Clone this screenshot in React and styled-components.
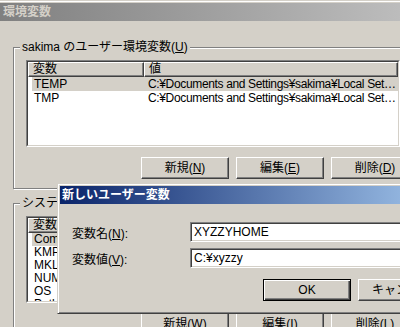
import React from "react";
import styled, { createGlobalStyle, css } from "styled-components";

const GlobalStyle = createGlobalStyle`
  html, body { margin: 0; padding: 0; }
  body {
    background: #d4d0c8;
    font-family: "Liberation Sans", "Noto Sans CJK JP", sans-serif;
    font-size: 12px;
    color: #000;
    overflow: hidden;
  }
`;

const Desktop = styled.div`
  position: relative;
  width: 400px;
  height: 327px;
  overflow: hidden;
  background: #d4d0c8;
`;

const Window = styled.div`
  width: 430px;
  height: 360px;
  margin-left: -3px;
  box-sizing: border-box;
  border-top: 1px solid #d4d0c8;
  border-left: 1px solid #d4d0c8;
  padding: 2px 2px 0 2px;
  box-shadow: inset 1px 1px 0 #fff;
  background: #d4d0c8;
`;

const TitleBar = styled.div`
  flex: none;
  height: 18px;
  display: flex;
  align-items: center;
  padding-left: ${(p) => p.$pad}px;
  background: ${(p) =>
    p.$active
      ? "linear-gradient(to right, #0a246a, #a6caf0)"
      : "linear-gradient(to right, #808080, #c0c0c0)"};
  color: ${(p) => (p.$active ? "#fff" : "#d4d0c8")};
  font-weight: bold;
  line-height: 14px;
  white-space: nowrap;
`;

const WindowBody = styled.div`
  padding: 26px 13px 0 13px;
`;

const GroupBox = styled.div`
  position: relative;
  border: 1px solid #808080;
  box-shadow: 1px 1px 0 #fff, inset 1px 1px 0 #fff;
  padding: 12px 12px 9px 12px;
  & + & {
    margin-top: 14px;
  }
`;

const GroupLabel = styled.span`
  position: absolute;
  top: -8px;
  left: 6px;
  padding: 0 2px;
  background: #d4d0c8;
  line-height: 14px;
  white-space: nowrap;
`;

const ListOuter = styled.div`
  width: 374px;
  height: 87px;
  box-sizing: border-box;
  border: 1px solid;
  border-color: #808080 #fff #fff #808080;
`;

const ListInner = styled.div`
  height: 100%;
  box-sizing: border-box;
  border: 1px solid;
  border-color: #404040 #d4d0c8 #d4d0c8 #404040;
  background: #fff;
  overflow: hidden;
`;

const Header = styled.div`
  display: flex;
  height: 15px;
`;

const HeaderCell = styled.div`
  width: ${(p) => (p.$grow ? "auto" : `${p.$w}px`)};
  flex: ${(p) => (p.$grow ? 1 : "none")};
  box-sizing: border-box;
  background: #d4d0c8;
  border: 1px solid;
  border-color: #fff #404040 #404040 #fff;
  box-shadow: inset -1px -1px 0 #808080;
  padding-left: 4px;
  line-height: 13px;
  white-space: nowrap;
`;

const Row = styled.div`
  display: flex;
  height: ${(p) => p.$h}px;
  line-height: ${(p) => p.$h}px;
  margin-left: 4px;
  background: ${(p) => (p.$selected ? "#d4d0c8" : "transparent")};
  white-space: nowrap;
`;

const NameCell = styled.div`
  width: 112px;
  flex: none;
  box-sizing: border-box;
  padding-left: 2px;
  overflow: hidden;
`;

const ValueCell = styled.div`
  flex: 1;
  padding-left: 4px;
  overflow: hidden;
  letter-spacing: -0.35px;
`;

const ButtonRow = styled.div`
  display: flex;
  gap: 7px;
  margin-top: ${(p) => p.$top}px;
  padding-left: ${(p) => p.$indent}px;
`;

const Button = styled.button`
  width: 88px;
  height: 22px;
  flex: none;
  box-sizing: border-box;
  padding: 0;
  background: #d4d0c8;
  font: inherit;
  color: #000;
  line-height: 14px;
  white-space: nowrap;
  border: 1px solid;
  border-color: #fff #404040 #404040 #fff;
  box-shadow: inset -1px -1px 0 #808080;
  ${(p) =>
    p.$default &&
    css`
      border-color: #000;
      box-shadow: inset 1px 1px 0 #fff, inset -1px -1px 0 #404040,
        inset -2px -2px 0 #808080;
    `}
`;

const Mn = styled.span`
  text-decoration: underline;
`;

const Dialog = styled.div`
  position: absolute;
  left: 57px;
  top: 183px;
  width: 400px;
  height: 131px;
  box-sizing: border-box;
  border: 1px solid;
  border-color: #d4d0c8 #404040 #404040 #d4d0c8;
  box-shadow: inset 1px 1px 0 #fff, inset -1px -1px 0 #808080;
  padding: 2px;
  background: #d4d0c8;
  display: flex;
  flex-direction: column;
`;

const DialogBody = styled.div`
  padding: 18px 12px 0 12px;
`;

const Field = styled.div`
  display: flex;
  align-items: center;
  height: 20px;
  & + & {
    margin-top: 6px;
  }
`;

const FieldLabel = styled.label`
  width: 118px;
  flex: none;
  white-space: nowrap;
`;

const TextBox = styled.input`
  flex: 1;
  min-width: 0;
  height: 20px;
  box-sizing: border-box;
  margin: 0;
  padding: 0 3px;
  font: inherit;
  color: #000;
  background: #fff;
  outline: none;
  border: 1px solid;
  border-color: #808080 #fff #fff #808080;
  box-shadow: inset 1px 1px 0 #404040, inset -1px -1px 0 #d4d0c8;
`;

const userVars = [
  { name: "TEMP", value: "C:¥Documents and Settings¥sakima¥Local Set…", selected: true },
  { name: "TMP", value: "C:¥Documents and Settings¥sakima¥Local Set…" },
];

const sysVars = [
  { name: "ComSpec", value: "C:¥WINDOWS¥system32¥cmd.exe", selected: true },
  { name: "KMP_AFFINITY", value: "compact" },
  { name: "MKL_NUM_THREADS", value: "2" },
  { name: "NUMBER_OF_PROCESSORS", value: "2" },
  { name: "OS", value: "Windows_NT" },
  { name: "Path", value: "C:¥WINDOWS¥system32;C:¥WINDOWS" },
];

function Label({ text, k }) {
  return (
    <>
      {text}(<Mn>{k}</Mn>)
    </>
  );
}

function ListView({ rows, rowH }) {
  return (
    <ListOuter>
      <ListInner>
        <Header>
          <HeaderCell $w={116}>変数</HeaderCell>
          <HeaderCell $grow>値</HeaderCell>
        </Header>
        {rows.map((r) => (
          <Row key={r.name} $h={rowH} $selected={r.selected}>
            <NameCell>{r.name}</NameCell>
            <ValueCell>{r.value}</ValueCell>
          </Row>
        ))}
      </ListInner>
    </ListOuter>
  );
}

function VarGroup({ title, k, rows, rowH, keys }) {
  return (
    <GroupBox>
      <GroupLabel>
        <Label text={title} k={k} />
      </GroupLabel>
      <ListView rows={rows} rowH={rowH} />
      <ButtonRow $top={10} $indent={115}>
        <Button>
          <Label text="新規" k={keys[0]} />
        </Button>
        <Button>
          <Label text="編集" k={keys[1]} />
        </Button>
        <Button>
          <Label text="削除" k={keys[2]} />
        </Button>
      </ButtonRow>
    </GroupBox>
  );
}

export default function App() {
  return (
    <>
      <GlobalStyle />
      <Desktop>
        <Window>
          <TitleBar $pad={3}>環境変数</TitleBar>
          <WindowBody>
            <VarGroup
              title="sakima のユーザー環境変数"
              k="U"
              rows={userVars}
              rowH={14}
              keys={["N", "E", "D"]}
            />
            <VarGroup
              title="システム環境変数"
              k="S"
              rows={sysVars}
              rowH={13}
              keys={["W", "I", "L"]}
            />
          </WindowBody>
        </Window>

        <Dialog>
          <TitleBar $active $pad={2}>
            新しいユーザー変数
          </TitleBar>
          <DialogBody>
            <Field>
              <FieldLabel>
                変数名(<Mn>N</Mn>):
              </FieldLabel>
              <TextBox readOnly value="XYZZYHOME" />
            </Field>
            <Field>
              <FieldLabel>
                変数値(<Mn>V</Mn>):
              </FieldLabel>
              <TextBox readOnly value="C:¥xyzzy" />
            </Field>
            <ButtonRow $top={11} $indent={191}>
              <Button $default>OK</Button>
              <Button>キャンセル</Button>
            </ButtonRow>
          </DialogBody>
        </Dialog>
      </Desktop>
    </>
  );
}
